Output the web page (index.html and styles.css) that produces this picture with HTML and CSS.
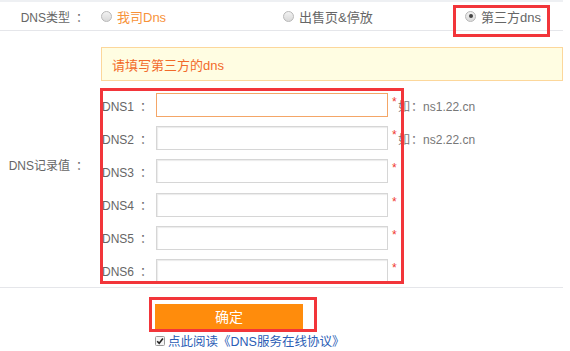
FILE: index.html
```html
<!DOCTYPE html>
<html lang="zh-CN">
<head>
<meta charset="utf-8">
<title>DNS设置</title>
<link rel="stylesheet" href="styles.css">
</head>
<body>
<div class="page">
  <div class="row row-type">
    <div class="label">DNS类型<span class="colon">：</span></div>
    <div class="content radios">
      <label class="radio"><span class="dot"></span><span class="opt orange">我司Dns</span></label>
      <label class="radio"><span class="dot"></span><span class="opt">出售页&amp;停放</span></label>
      <label class="radio last"><span class="dot checked"></span><span class="opt">第三方dns</span></label>
    </div>
  </div>
  <div class="row row-dns">
    <div class="label">DNS记录值<span class="colon">：</span></div>
    <div class="content">
      <div class="notice">请填写第三方的dns</div>
      <div class="dns-list">
        <div class="dns-row"><span class="dns-label">DNS1<span class="colon">：</span></span><input class="dns-input focus" type="text"><span class="star">*</span><span class="hint">如<span class="colon small">：</span>ns1.22.cn</span></div>
        <div class="dns-row"><span class="dns-label">DNS2<span class="colon">：</span></span><input class="dns-input" type="text"><span class="star">*</span><span class="hint">如<span class="colon small">：</span>ns2.22.cn</span></div>
        <div class="dns-row"><span class="dns-label">DNS3<span class="colon">：</span></span><input class="dns-input" type="text"><span class="star">*</span></div>
        <div class="dns-row"><span class="dns-label">DNS4<span class="colon">：</span></span><input class="dns-input" type="text"><span class="star">*</span></div>
        <div class="dns-row"><span class="dns-label">DNS5<span class="colon">：</span></span><input class="dns-input" type="text"><span class="star">*</span></div>
        <div class="dns-row"><span class="dns-label">DNS6<span class="colon">：</span></span><input class="dns-input" type="text"><span class="star">*</span></div>
      </div>
    </div>
  </div>
  <div class="actions">
    <button class="btn" type="button">确定</button>
    <div class="agree">
      <svg class="check" width="10" height="10" viewBox="0 0 10 10"><rect x="0.5" y="0.5" width="9" height="9" rx="1" fill="#f4f4f4" stroke="#9a9a9a"/><path d="M2.2 5.2 L4.2 7.2 L7.9 2.6" fill="none" stroke="#222" stroke-width="1.6"/></svg>
      <a class="link" href="#">点此阅读《DNS服务在线协议》</a>
    </div>
  </div>

  <div class="mark mark-radio"></div>
  <div class="mark mark-list"></div>
  <div class="mark mark-btn"></div>
</div>
</body>
</html>
```
FILE: styles.css
```css
* { box-sizing: border-box; }
html, body { margin: 0; padding: 0; background: #fff; }
body {
  font-family: "Liberation Sans", Arial, "Noto Sans CJK SC", sans-serif;
  font-size: 12px;
  color: #666;
}
.page { position: relative; width: 570px; height: 351px; overflow: hidden; }

.colon { margin-left: 6px; }
.colon.small { margin-left: 1px; margin-right: 0; }

.row { display: flex; width: 563px; border-bottom: 1px solid #e5e6ea; }
.row-type { border-top: 2px solid #eef0f3; height: 31px; align-items: center; }
.label { width: 88px; flex: none; text-align: right; padding-right: 0; color: #666; white-space: nowrap; }
.content { padding-left: 13px; flex: 1; min-width: 0; }

.radios { display: flex; align-items: center; }
.radio { display: flex; align-items: center; width: 182px; flex: none; }
.radio.last { width: auto; }
.dot {
  width: 11px; height: 11px; border-radius: 50%;
  border: 1px solid #b8b8b8;
  background: linear-gradient(#f2f2f2, #d9d9d9);
  margin-right: 5px; position: relative; flex: none;
}
.dot.checked::after {
  content: ""; position: absolute; left: 2.5px; top: 2.5px;
  width: 4px; height: 4px; border-radius: 50%; background: #444;
}
.opt { font-size: 13px; color: #666; }
.opt.orange { color: #f7923a; }

.row-dns { align-items: center; padding: 16px 0 4px; }
.notice {
  height: 34px; width: 462px;
  background: #fffde2; border: 1px solid #fcd79b;
  color: #f26a2a; font-size: 13px;
  display: flex; align-items: center; padding-left: 10px;
}
.dns-list { display: flex; flex-direction: column; gap: 9.2px; margin-top: 12px; }
.dns-row { display: flex; align-items: center; height: 24px; }
.dns-label { width: 55px; flex: none; padding-left: 1px; color: #666; white-space: nowrap; }
.dns-input {
  width: 232px; height: 24px; margin: 0; padding: 0 4px;
  border: 1px solid #d6d6d6; border-radius: 0;
  box-shadow: inset 1px 1px 1px rgba(0,0,0,0.08);
  background: #fff; outline: none;
}
.dns-input.focus { border-color: #f4a667; box-shadow: none; }
.star { color: #f0392f; font-size: 12px; margin-left: 4px; align-self: flex-start; margin-top: 2px; width: 6px; }
.hint { color: #777; font-size: 12px; white-space: nowrap; }

.actions { padding: 16px 0 0 155px; }
.btn {
  display: block; width: 148px; height: 25px; margin: 0;
  background: #ff8c0c; border: none; color: #fff;
  font-family: inherit; font-size: 14px; padding: 0;
}
.agree { display: flex; align-items: center; margin-top: 6px; height: 12px; }
.check { margin-right: 3px; flex: none; }
.link { color: #2a5db5; text-decoration: none; font-size: 12.5px; white-space: nowrap; }

.mark { position: absolute; border: 3px solid #f2353a; pointer-events: none; }
.mark-radio { left: 453px; top: 5px; width: 97px; height: 32px; }
.mark-list { left: 100px; top: 88px; width: 304px; height: 196px; }
.mark-btn { left: 149px; top: 297px; width: 168px; height: 35px; }
```
